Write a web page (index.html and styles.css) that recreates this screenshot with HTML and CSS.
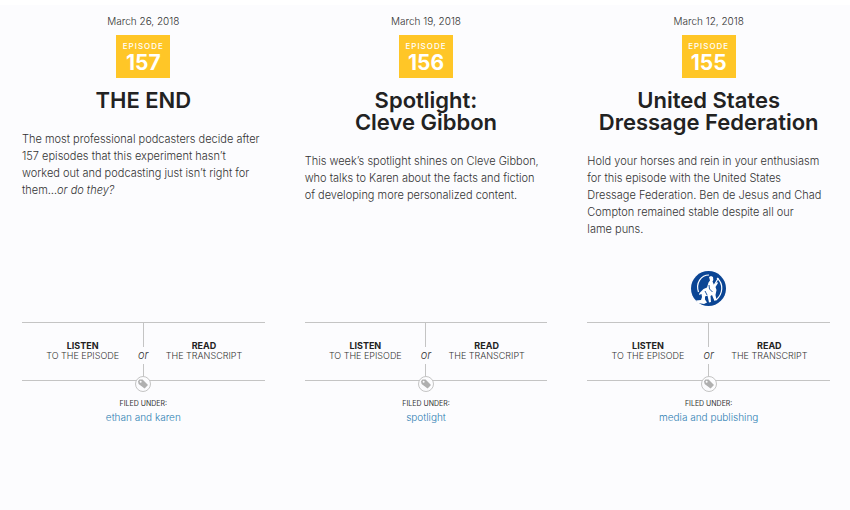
FILE: index.html
```
<!DOCTYPE html>
<html lang="en">
<head>
<meta charset="utf-8">
<title>Podcast Episodes</title>
<link rel="stylesheet" href="styles.css">
</head>
<body>
<svg class="sprite" aria-hidden="true">
  <symbol id="tag" viewBox="0 0 14 14">
    <path fill="#b0b0b0" fill-rule="evenodd" d="M2 4.200 3.400 2.400 6.600 2.600 12 8 8.600 11.600 2.600 7ZM4.600 3.700a1 1 0 1 0 .1 2 1 1 0 0 0-.1-2Z"/>
  </symbol>
</svg>

<main class="episodes">

  <article class="episode">
    <time class="date" datetime="2018-03-26">March 26, 2018</time>
    <div class="badge"><span class="badge-label">Episode</span><span class="badge-number">157</span></div>
    <h2>THE END</h2>
    <p class="summary">The most professional podcasters decide after 157 episodes that this experiment hasn’t worked out and podcasting just isn’t right for them…<em>or do they?</em></p>
    <div class="links">
      <a href="#listen-157"><strong>Listen</strong>to the episode</a>
      <span class="or"><i>or</i></span>
      <a href="#read-157"><strong>Read</strong>the transcript</a>
      <svg class="tag"><use href="#tag"/></svg>
    </div>
    <div class="filed">Filed under:</div>
    <a class="topic" href="#ethan-and-karen">ethan and karen</a>
  </article>

  <article class="episode">
    <time class="date" datetime="2018-03-19">March 19, 2018</time>
    <div class="badge"><span class="badge-label">Episode</span><span class="badge-number">156</span></div>
    <h2>Spotlight:<br>Cleve Gibbon</h2>
    <p class="summary">This week’s spotlight shines on Cleve Gibbon, who talks to Karen about the facts and fiction of developing more personalized content.</p>
    <div class="links">
      <a href="#listen-156"><strong>Listen</strong>to the episode</a>
      <span class="or"><i>or</i></span>
      <a href="#read-156"><strong>Read</strong>the transcript</a>
      <svg class="tag"><use href="#tag"/></svg>
    </div>
    <div class="filed">Filed under:</div>
    <a class="topic" href="#spotlight">spotlight</a>
  </article>

  <article class="episode">
    <time class="date" datetime="2018-03-12">March 12, 2018</time>
    <div class="badge"><span class="badge-label">Episode</span><span class="badge-number">155</span></div>
    <h2>United States<br>Dressage Federation</h2>
    <p class="summary">Hold your horses and rein in your enthusiasm for this episode with the United States Dressage Federation. Ben de Jesus and Chad Compton remained stable despite all our lame&nbsp;puns.</p>
    <svg class="logo" viewBox="0 0 35 35" role="img" aria-label="United States Dressage Federation">
      <circle cx="17.5" cy="17.5" r="17.5" fill="#0b4594"/>
      <path fill="none" stroke="#fff" stroke-width="1.200" d="M18 4C10 4 4.500 12 7.500 21M26 7c7 6 6 16-1 22M27.500 7 22 16"/>
      <path fill="#fff" d="M18 6l2-1 2 1 .3 3-.8 1.500 1.500 3.500 3-3 1 1-2.500 4 1 3-1 5 1 5-2 1-2.500-6-1.500 1 .5 6-2 .5-1.500-7-2.500 1 0 3 2 3-3 1.500-6-1-2-2.500 5-.5 1-3-.5-3-2.500 1 .5-2 4-4 3.500-1.500 1.500-5 1.500-2z"/>
      <path fill="none" stroke="#0b4594" stroke-width=".9" d="M18 14l.5 4 3 3M14 20l2 4"/>
    </svg>
    <div class="links">
      <a href="#listen-155"><strong>Listen</strong>to the episode</a>
      <span class="or"><i>or</i></span>
      <a href="#read-155"><strong>Read</strong>the transcript</a>
      <svg class="tag"><use href="#tag"/></svg>
    </div>
    <div class="filed">Filed under:</div>
    <a class="topic" href="#media-and-publishing">media and publishing</a>
  </article>

</main>
</body>
</html>
```
FILE: styles.css
```
body {
  margin: 0;
  border-top: 5px solid #fff;
  background: #fcfcfe;
  color: #333;
  font-family: Inter, "Liberation Sans", sans-serif;
  font-size: 11px;
  font-weight: 300;
  line-height: 17px;
}
a { text-decoration: none; }

.sprite { position: absolute; width: 0; height: 0; }

.episodes {
  display: grid;
  grid-template-columns: repeat(3, 1fr);
  gap: 40px;
  padding: 8px 20px 20px 22px;
}
.episode {
  display: flex;
  flex-direction: column;
  align-items: center;
}

.date { font-size: 10px; }
.badge {
  display: flex;
  flex-direction: column;
  align-items: center;
  box-sizing: border-box;
  width: 54px;
  height: 43px;
  margin-top: 5px;
  padding-top: 6px;
  background: #ffc627;
  color: #fff;
}
.badge-label {
  font-size: 8px;
  font-weight: 500;
  line-height: 10px;
  letter-spacing: 1px;
  text-transform: uppercase;
}
.badge-number {
  font-size: 21px;
  font-weight: 700;
  line-height: 23px;
}

h2 {
  margin: 11px 0 20px;
  color: #222;
  font-size: 22px;
  font-weight: 600;
  line-height: 22px;
  text-align: center;
}
.summary { align-self: stretch; margin: 0; }
.logo {
  width: 35px;
  height: 35px;
  margin: 33px 0 16px;
}

/* listen / read */
.links {
  position: relative;
  display: grid;
  grid-template-columns: 1fr 1fr;
  align-self: stretch;
  margin-top: auto;
  padding: 18px 0 19px;
  border-top: 1px solid #c4c4c4;
  border-bottom: 1px solid #c4c4c4;
}
.links a {
  color: #333;
  font-size: 9px;
  line-height: 10px;
  text-align: center;
  text-transform: uppercase;
}
.links strong {
  display: block;
  color: #222;
  font-weight: 700;
}
.or {
  position: absolute;
  inset: 0;
  display: flex;
  flex-direction: column;
  align-items: center;
  pointer-events: none;
}
.or::before,
.or::after {
  content: "";
  flex: 1;
  border-left: 1px solid #c4c4c4;
}
.or::before { flex: 3; }
.or::after { flex: 2; }
.tag {
  position: absolute;
  left: 50%;
  bottom: -12px;
  box-sizing: border-box;
  width: 16px;
  height: 16px;
  margin-left: -8px;
  border: 1px solid #c4c4c4;
  border-radius: 50%;
  background: #fcfcfe;
}

.filed {
  margin-top: 18px;
  font-size: 7px;
  font-weight: 400;
  line-height: 10px;
  text-transform: uppercase;
}
.topic {
  color: #2f7fb3;
  font-size: 10px;
}
```
